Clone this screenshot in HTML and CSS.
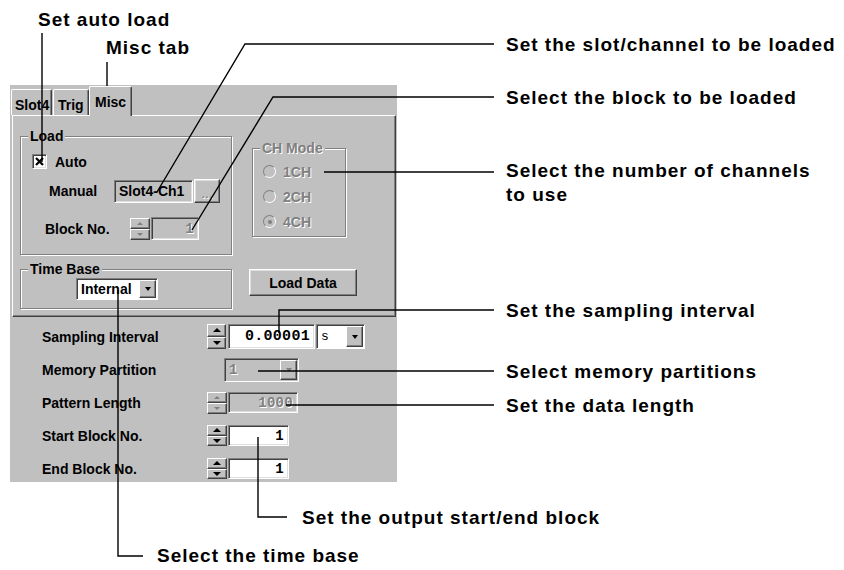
FILE: index.html
```html
<!DOCTYPE html>
<html lang="en">
<head>
    <meta charset="UTF-8">
    <title>Misc tab</title>
    <link rel="stylesheet" href="styles.css">
</head>
<body>

<div class="figure">

    <!-- Dialog panel -->
    <div class="panel">
        <div class="tabs">
            <div class="tab tab-slot">Slot4</div>
            <div class="tab tab-trig">Trig</div>
            <div class="tab tab-misc active">Misc</div>
        </div>

        <div class="page">
            <div class="group load">
                <span class="legend">Load</span>
                <div class="auto-row">
                    <span class="check"><svg width="9" height="9" viewBox="0 0 9 9"><path d="M1 1L8 8M8 1L1 8" stroke="#000" stroke-width="2.2"/></svg></span>
                    <span>Auto</span>
                </div>
                <div class="manual-row">
                    <span class="lbl">Manual</span>
                    <span class="edit gray slot-edit">Slot4-Ch1</span>
                    <span class="btn dots">...</span>
                </div>
                <div class="block-row">
                    <span class="lbl">Block No.</span>
                    <span class="spin off"><span class="up"></span><span class="down"></span></span>
                    <span class="edit gray num dim block-edit">1</span>
                </div>
            </div>

            <div class="group chmode">
                <span class="legend dim">CH Mode</span>
                <div class="ch-list">
                    <div class="ch-item"><span class="radio"></span><span class="dim">1CH</span></div>
                    <div class="ch-item"><span class="radio"></span><span class="dim">2CH</span></div>
                    <div class="ch-item"><span class="radio on"></span><span class="dim">4CH</span></div>
                </div>
            </div>

            <div class="group timebase">
                <span class="legend">Time Base</span>
                <div class="combo time-combo">
                    <span class="combo-text">Internal</span>
                    <span class="combo-btn"></span>
                </div>
            </div>

            <div class="btn load-data">Load Data</div>
        </div>

        <!-- Settings below the tab page -->
        <div class="rows">
            <div class="field-row">
                <span class="lbl">Sampling Interval</span>
                <span class="spin tall"><span class="up"></span><span class="down"></span></span>
                <span class="edit num interval-edit">0.00001</span>
                <div class="combo unit-combo">
                    <span class="combo-text mono">s</span>
                    <span class="combo-btn"></span>
                </div>
            </div>
            <div class="field-row">
                <span class="lbl">Memory Partition</span>
                <div class="combo gray partition-combo">
                    <span class="combo-text dim">1</span>
                    <span class="combo-btn off"></span>
                </div>
            </div>
            <div class="field-row">
                <span class="lbl">Pattern Length</span>
                <span class="spin off"><span class="up"></span><span class="down"></span></span>
                <span class="edit gray num dim length-edit">1000</span>
            </div>
            <div class="field-row">
                <span class="lbl">Start Block No.</span>
                <span class="spin"><span class="up"></span><span class="down"></span></span>
                <span class="edit num short-edit">1</span>
            </div>
            <div class="field-row">
                <span class="lbl">End Block No.</span>
                <span class="spin"><span class="up"></span><span class="down"></span></span>
                <span class="edit num short-edit">1</span>
            </div>
        </div>
    </div>

    <!-- Leader lines -->
    <svg class="leaders" width="844" height="570" viewBox="0 0 844 570">
        <path d="M42 33V162"/>
        <path d="M107 62V97"/>
        <path d="M494 44H245L157 192"/>
        <path d="M494 97H273L192 230"/>
        <path d="M494 172H324"/>
        <path d="M494 310H279V333"/>
        <path d="M494 371H258"/>
        <path d="M494 405H286"/>
        <path d="M287 517H258V437"/>
        <path d="M143 556H118V290"/>
    </svg>

    <!-- Callout texts -->
    <div class="note" style="left:38px; top:10px;">Set auto load</div>
    <div class="note" style="left:106px; top:38px;">Misc tab</div>
    <div class="note" style="left:506px; top:35px;">Set the slot/channel to be loaded</div>
    <div class="note" style="left:506px; top:88px;">Select the block to be loaded</div>
    <div class="note two" style="left:506px; top:159px;">Select the number of channels<br>to use</div>
    <div class="note" style="left:506px; top:301px;">Set the sampling interval</div>
    <div class="note" style="left:506px; top:362px;">Select memory partitions</div>
    <div class="note" style="left:506px; top:396px;">Set the data length</div>
    <div class="note" style="left:302px; top:508px;">Set the output start/end block</div>
    <div class="note" style="left:157px; top:546px;">Select the time base</div>
</div>

</body>
</html>
```

FILE: styles.css
```css
body { margin: 0; background: #fff; font-family: "Liberation Sans", Arial, sans-serif; }
.figure { position: relative; width: 844px; height: 570px; padding: 85px 0 0 10px; box-sizing: border-box; overflow: hidden; }

/* dialog */
.panel { width: 387px; height: 397px; background: #c0c0c0; font-size: 14px; font-weight: bold; line-height: 16px; color: #000; }
.tabs { display: flex; align-items: flex-end; height: 30px; padding-left: 1px; }
.tab { height: 26px; box-sizing: border-box; padding: 7px 0 0 3px; border-top: 1px solid #fff; border-left: 1px solid #fff; border-right: 1px solid #404040; box-shadow: inset -1px 0 #808080; border-radius: 2px 2px 0 0; background: #c0c0c0; }
.tab-slot { width: 41px; }
.tab-trig { width: 36px; margin-left: 1px; padding-left: 4px; }
.tab-misc { width: 43px; padding-left: 5px; }
.tab.active { height: 30px; margin-bottom: -1px; position: relative; z-index: 1; }

.page { margin-left: 2px; width: 384px; height: 202px; box-sizing: border-box; border: 1px solid #fff; border-right-color: #404040; border-bottom-color: #404040; box-shadow: inset -1px -1px #808080; padding: 20px 0 0 7px; display: grid; grid-template-columns: 212px 1fr; grid-template-rows: 119px 40px; column-gap: 17px; row-gap: 14px; align-items: start; }

.group { position: relative; box-sizing: border-box; border: 1px solid #808080; box-shadow: 1px 1px #fff, inset 1px 1px #fff; }
.legend { position: absolute; top: -9px; left: 7px; padding: 0 2px; background: #c0c0c0; }
.load { height: 119px; }
.chmode { width: 94px; height: 89px; margin: 12px 0 0 3px; }
.timebase { height: 40px; }

.dim { color: #808080; text-shadow: 1px 1px 0 #fff; }
.mono, .num { font-family: "Liberation Mono", "Courier New", monospace; }

.auto-row { display: flex; align-items: center; gap: 8px; height: 15px; margin: 17px 0 0 11px; }
.check { width: 15px; height: 15px; box-sizing: border-box; background: #fff; border: 1px solid; border-color: #808080 #fff #fff #808080; box-shadow: inset 1px 1px #404040, inset -1px -1px #dfdfdf; display: flex; align-items: center; justify-content: center; }
.manual-row { display: flex; align-items: center; height: 24px; margin-top: 10px; padding-left: 28px; }
.manual-row .lbl { width: 65px; }
.block-row { display: flex; align-items: center; height: 23px; margin-top: 14px; padding-left: 24px; }
.block-row .lbl { width: 85px; }

/* sunken edit box */
.edit { box-sizing: border-box; background: #fff; border: 1px solid; border-color: #808080 #fff #fff #808080; box-shadow: inset 1px 1px #404040, inset -1px -1px #dfdfdf; display: flex; align-items: center; padding: 0 4px; }
.edit.num { justify-content: flex-end; letter-spacing: 0.3px; }
.edit.gray, .combo.gray { background: #c0c0c0; }
.slot-edit { width: 79px; height: 23px; }
.block-edit { width: 48px; height: 23px; margin-left: 1px; }
.interval-edit { width: 87px; height: 25px; margin-left: 2px; font-size: 15px; }
.length-edit { width: 70px; height: 21px; margin-left: 1px; }
.short-edit { width: 61px; height: 21px; margin-left: 1px; }

/* raised button */
.btn { box-sizing: border-box; border: 1px solid; border-color: #fff #404040 #404040 #fff; box-shadow: inset -1px -1px #808080, inset 1px 1px #dfdfdf; display: flex; align-items: center; justify-content: center; }
.dots { width: 26px; height: 24px; margin-left: 1px; color: #808080; text-shadow: 1px 1px 0 #fff; font-weight: normal; padding-top: 4px; }
.load-data { width: 108px; height: 27px; }

/* spinner */
.spin { display: flex; flex-direction: column; width: 20px; height: 21px; }
.spin.tall { width: 19px; height: 25px; }
.spin.off { height: 22px; }
.spin span { flex: 1; box-sizing: border-box; border: 1px solid; border-color: #fff #404040 #404040 #fff; box-shadow: inset -1px -1px #808080; display: flex; align-items: center; justify-content: center; }
.spin .up::after { content: ""; border-left: 4px solid transparent; border-right: 4px solid transparent; border-bottom: 4px solid #000; }
.spin .down::after { content: ""; border-left: 4px solid transparent; border-right: 4px solid transparent; border-top: 4px solid #000; }
.spin.off .up::after { border-bottom-color: #808080; border-left-width: 3px; border-right-width: 3px; border-bottom-width: 3px; }
.spin.off .down::after { border-top-color: #808080; border-left-width: 3px; border-right-width: 3px; border-top-width: 3px; }

/* combo box */
.combo { box-sizing: border-box; display: flex; background: #fff; border: 1px solid; border-color: #808080 #fff #fff #808080; box-shadow: inset 1px 1px #404040; padding: 1px 1px 1px 1px; }
.combo-text { flex: 1; display: flex; align-items: center; padding-left: 3px; }
.combo-btn { width: 17px; box-sizing: border-box; border: 1px solid; border-color: #fff #404040 #404040 #fff; box-shadow: inset -1px -1px #808080; background: #c0c0c0; display: flex; align-items: center; justify-content: center; }
.combo-btn::after { content: ""; border-left: 3.5px solid transparent; border-right: 3.5px solid transparent; border-top: 4px solid #000; }
.combo-btn.off::after { border-top-color: #808080; }
.time-combo { width: 82px; height: 22px; margin: 8px 0 0 55px; }
.unit-combo { width: 49px; height: 25px; margin-left: 1px; }
.unit-combo .combo-text { font-weight: normal; font-size: 13px; }
.partition-combo { width: 75px; height: 24px; margin-left: 17px; }
.partition-combo .combo-text { font-family: "Liberation Mono", monospace; }

.ch-list { padding: 10px 0 0 10px; }
.ch-item { display: flex; align-items: center; gap: 7px; height: 25px; }
.radio { width: 13px; height: 13px; box-sizing: border-box; border-radius: 50%; border: 1px solid; border-color: #808080 #fff #fff #808080; display: flex; align-items: center; justify-content: center; }
.radio.on::after { content: ""; width: 4px; height: 4px; border-radius: 50%; background: #808080; }

.rows { display: grid; grid-auto-rows: 33px; margin-top: 3px; padding-left: 32px; }
.field-row { display: flex; align-items: center; }
.field-row .lbl { width: 165px; }

/* callouts */
.leaders { position: absolute; left: 0; top: 0; }
.leaders path { fill: none; stroke: #000; stroke-width: 1.4; }
.note { position: absolute; font-size: 19px; line-height: 19px; font-weight: bold; letter-spacing: 1px; color: #000; white-space: nowrap; }
.note.two { line-height: 24px; }
```
